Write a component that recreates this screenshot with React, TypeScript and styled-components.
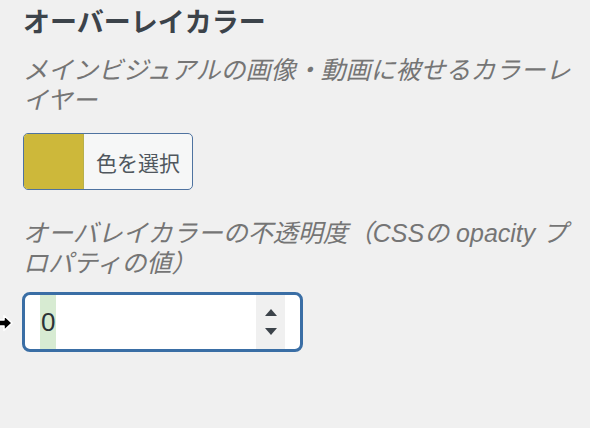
import React from "react";
import styled, { createGlobalStyle } from "styled-components";

const GlobalStyle = createGlobalStyle`
  html, body {
    margin: 0;
    padding: 0;
    background: #f0f0f0;
  }
  body {
    font-family: "Liberation Sans", "Noto Sans CJK JP", sans-serif;
  }
`;

const Panel = styled.section`
  position: relative;
  width: 590px;
  height: 428px;
  box-sizing: border-box;
  padding: 6px 14px 0 23px;
  background: #f0f0f0;
  display: flex;
  flex-direction: column;
  align-items: flex-start;
`;

const Heading = styled.h2`
  margin: 0;
  font-size: 27px;
  font-weight: 700;
  line-height: 35px;
  color: #3c434a;
`;

const Help = styled.p<{ $top: number }>`
  margin: ${(p) => p.$top}px 0 0;
  font-size: 25px;
  font-style: italic;
  line-height: 30px;
  color: #757575;
`;

const ColorButton = styled.button`
  margin-top: 18px;
  display: flex;
  align-items: stretch;
  width: 170px;
  height: 57px;
  padding: 0;
  border: 1px solid #4f73a0;
  border-radius: 5px;
  overflow: hidden;
  background: #f6f7f7;
  font-family: inherit;
  cursor: pointer;
`;

const Swatch = styled.span<{ $color: string }>`
  width: 59px;
  background: ${(p) => p.$color};
  border-right: 1px solid #b8b04a;
`;

const ButtonLabel = styled.span`
  flex: 1;
  display: flex;
  align-items: center;
  justify-content: center;
  font-size: 21px;
  color: #50575e;
`;

const NumberField = styled.div`
  margin-top: 14px;
  margin-left: -1px;
  display: flex;
  align-items: stretch;
  width: 281px;
  height: 60px;
  box-sizing: border-box;
  border: 3px solid #3a6ea5;
  border-radius: 8px;
  background: #fff;
  padding-left: 15px;
`;

const Value = styled.span`
  display: flex;
  align-items: center;
  padding: 0 1px;
  background: #d7ebd2;
  font-size: 26px;
  color: #2c3338;
`;

const Spacer = styled.span`
  flex: 1;
`;

const Spinner = styled.span`
  width: 29px;
  margin-right: 15px;
  background: #f0f0f0;
  display: flex;
  flex-direction: column;
  align-items: center;
  justify-content: center;
  gap: 12px;
`;

const Cursor = styled.svg`
  position: absolute;
  left: -3px;
  top: 314px;
`;

export default function App() {
  return (
    <>
      <GlobalStyle />
      <Panel>
        <Heading>オーバーレイカラー</Heading>
        <Help $top={14}>メインビジュアルの画像・動画に被せるカラーレイヤー</Help>
        <ColorButton type="button">
          <Swatch $color="#cdb83a" />
          <ButtonLabel>色を選択</ButtonLabel>
        </ColorButton>
        <Help $top={28}>オーバレイカラーの不透明度（CSSの opacity プロパティの値）</Help>
        <NumberField>
          <Value>0</Value>
          <Spacer />
          <Spinner>
            <svg width="12" height="7" viewBox="0 0 12 7">
              <path d="M6 0 L12 7 L0 7 Z" fill="#3c434a" />
            </svg>
            <svg width="12" height="7" viewBox="0 0 12 7">
              <path d="M0 0 L12 0 L6 7 Z" fill="#3c434a" />
            </svg>
          </Spinner>
        </NumberField>
        <Cursor width="16" height="18" viewBox="0 0 16 18">
          <path d="M1 6 L7 6 L7 1.5 L15 9 L7 16.5 L7 12 L1 12 Z" fill="#000" stroke="#fff" strokeWidth="1.6" strokeLinejoin="round" />
        </Cursor>
      </Panel>
    </>
  );
}
